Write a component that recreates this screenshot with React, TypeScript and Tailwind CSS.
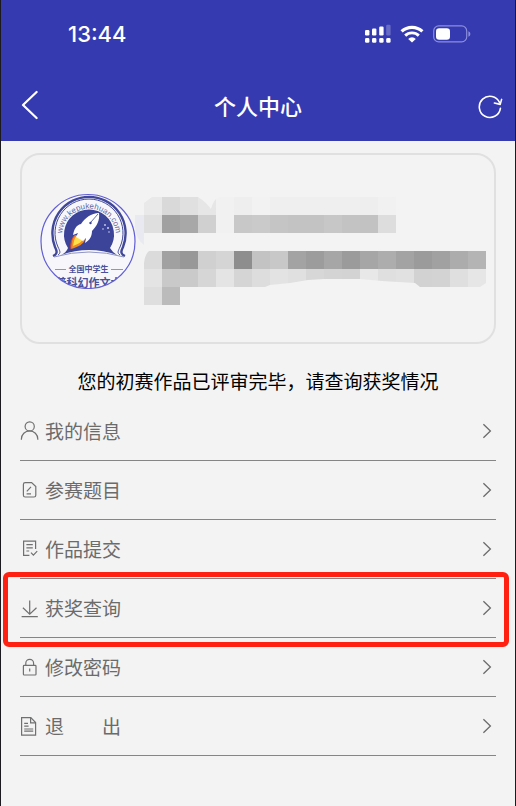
import React from 'react';

interface MenuItemProps {
  label: string;
  icon: React.ReactNode;
  highlighted?: boolean;
}

const CELL = 18;

// shades of the hidden user details, one array per row of cells
const mosaicRows: string[][] = [
  ['#e9e9e9', '#d9d9d9', '#e0e0e0', '#e6e6e6', '#f1f1f1', '#eeeeee', '#f2f2f2', '#efefef', '#efefef', '#efefef', '#efefef', '#efefef', '#eeeeee', '#f1f1f1'],
  ['#dfdfdf', '#a1a1a1', '#a8a8a8', '#d0d0d0', '#f1f1f1', '#c8c8c8', '#cacaca', '#c5c5c5', '#c3c3c3', '#c3c3c3', '#c7c7c7', '#c3c3c3', '#c2c2c2', '#dddddd'],
  [],
  ['#dbdbdb', '#a1a1a1', '#989898', '#d0d0d0', '#d5d5d5', '#8e8e8e', '#c3c3c3', '#c8c8c8', '#a3a3a3', '#9c9c9c', '#a6a6a6', '#9b9b9b', '#a6a6a6', '#adadad', '#a3a3a3', '#9b9b9b', '#a1a1a1', '#acacac', '#b4b4b4'],
  ['#e4e4e4', '#c9c9c9', '#cacaca', '#d6d6d6', '#e4e4e4', '#d5d5d5', '#dddddd', '#e3e3e3', '#e0e0e0', '#d7d7d7', '#d4d4d4', '#d3d3d3', '#e8e8e8', '#dfdfdf', '#e1e1e1', '#d2d2d2', '#d3d3d3', '#dfdfdf', '#e6e6e6'],
  ['#dedede', '#bbbbbb'],
];

const HiddenDetails = () => (
  <svg width="352" height="108" viewBox="-10 0 352 108" aria-hidden="true" className="shrink-0">
    <defs>
      <clipPath id="brush">
        <path d="M8 0H54Q62 5 67 12Q69 4 74 0H342V86L336 90H276L271 86L238 84L216 82H180L164 83L146 86L126 88L121 90H36V108H0V66Q1 57 5 54V36H0V6Z" />
      </clipPath>
    </defs>
    <path d="M-9 18H0V48Q-8 42 -9 30Z" fill="#e9e9f1" />
    <g clipPath="url(#brush)" shapeRendering="crispEdges">
      {mosaicRows.map((row, y) =>
        row.map((fill, x) => (
          <rect key={`${x}-${y}`} x={x * CELL} y={y * CELL} width={CELL} height={CELL} fill={fill} />
        ))
      )}
    </g>
  </svg>
);

const ContestLogo = () => (
  <svg width="96" height="96" viewBox="0 0 96 96" role="img" aria-label="全国中学生科普科幻作文大赛" className="shrink-0">
    <defs>
      <clipPath id="logo-round">
        <circle cx="48" cy="48.5" r="47" />
      </clipPath>
      <path id="site-arc" d="M24.5 54A27 27 0 1 1 73.5 54" />
    </defs>
    <g clipPath="url(#logo-round)">
      <rect width="96" height="96" fill="#f7f7fb" />
      <path d="M13 63C18 61 17 58 15 54A36.6 36.6 0 1 1 83 54C81 58 80 61 85 63" fill="none" stroke="#424899" strokeWidth="2.4" />
      <path d="M18 62C21 60 20 58 18 54A34 34 0 1 1 80 54C78 58 77 60 80 62" fill="none" stroke="#424899" strokeWidth="1" />
      <path d="M28 55A25 25 0 1 1 70 55Q73 60 77 62Q49 52 21 62Q26 60 28 55Z" fill="#3c4499" />
      <path d="M14 64Q49 54 84 64" fill="none" stroke="#7378b5" strokeWidth="0.8" />
      <text fontSize="8" fill="#6267a6" fontFamily="Liberation Sans, sans-serif">
        <textPath href="#site-arc" startOffset="50%" textAnchor="middle">www.kepukehuan.com</textPath>
      </text>
      <path d="M36 42C32 43 31 49 31 56C38 54 44 51 45 46Z" fill="#f08a24" />
      <path d="M37 43C34 45 34 49 33 53C38 51 42 49 43 46Z" fill="#ffe04a" />
      <path d="M31 56C30 51 32 45 35 42" fill="none" stroke="#d94a2b" strokeWidth="1" />
      <path d="M59 20C51 20 45 25 41 31C36 32 34 37 33 42L38 40L36 44L43 48L46 45L45 50C50 47 52 43 52 38C57 33 60 27 59 20Z" fill="#ffffff" />
      <path d="M58 21L51 29" stroke="#3c4499" strokeWidth="0.8" />
      <circle cx="50.5" cy="30" r="1.2" fill="#3c4499" />
      <circle cx="65" cy="32" r="0.9" fill="#cfd2ec" />
      <circle cx="68" cy="35" r="1" fill="#cfd2ec" />
      <circle cx="63" cy="36" r="0.8" fill="#cfd2ec" />
      <circle cx="69" cy="39" r="0.8" fill="#cfd2ec" />
      <path d="M15 76.5H26M71 76.5H83" stroke="#8588bb" strokeWidth="0.9" />
      <g fill="#4a509b" fontFamily="'Noto Sans CJK SC', sans-serif" fontWeight="700" textAnchor="middle">
        <text x="48.5" y="78.5" fontSize="8">全国中学生</text>
        <text x="48.5" y="94" fontSize="11">普科幻作文大</text>
      </g>
    </g>
    <circle cx="48" cy="48.5" r="47" fill="none" stroke="#625fd6" strokeWidth="1.2" />
  </svg>
);

const SignalIcon = () => (
  <svg width="27" height="20" viewBox="0 0 27 20" fill="#fff" aria-hidden="true">
    <rect x="1" y="6" width="4.4" height="5.5" rx="1.2" />
    <rect x="8" y="4.5" width="4.4" height="7" rx="1.2" />
    <rect x="15.2" y="2.5" width="4.4" height="9" rx="1.2" />
    <rect x="22.2" y="0.8" width="4.4" height="10.7" rx="1.2" opacity="0.25" />
    <rect x="1" y="14" width="4.4" height="4.8" rx="1.4" />
    <rect x="8" y="14" width="4.4" height="4.8" rx="1.4" />
    <rect x="15.2" y="14" width="4.4" height="4.8" rx="1.4" />
    <rect x="22.2" y="14" width="4.4" height="4.8" rx="1.4" />
  </svg>
);

const WifiIcon = () => (
  <svg width="24" height="18" viewBox="0 0 24 18" aria-hidden="true">
    <path d="M1.6 6.4A15.2 15.2 0 0 1 22.4 6.4" fill="none" stroke="#fff" strokeWidth="3.2" />
    <path d="M5.2 10.6A9.8 9.8 0 0 1 18.8 10.6" fill="none" stroke="#fff" strokeWidth="2.9" />
    <path d="M12 17.6L8.2 13.9A5.4 5.4 0 0 1 15.8 13.9Z" fill="#fff" />
  </svg>
);

const BatteryIcon = () => (
  <svg width="38" height="18" viewBox="0 0 38 18" aria-hidden="true">
    <rect x="0.7" y="0.9" width="33" height="16" rx="5" fill="none" stroke="#8b8edb" strokeWidth="1.2" />
    <rect x="3" y="3.2" width="14" height="11.6" rx="3.2" fill="#fff" />
    <path d="M35.4 6.3Q37.4 7 37.4 9T35.4 11.7Z" fill="#8b8edb" />
  </svg>
);

const UserIcon = () => (
  <>
    <circle cx="9.7" cy="5.4" r="4.6" />
    <path d="M1.4 18.8V18A8.2 8.2 0 0 1 17.8 18V18.8" />
  </>
);

const TopicIcon = () => (
  <>
    <path d="M5.2 2.6H11.6L15.8 6.6V15.2Q15.8 17 14 17H5.2Q3.4 17 3.4 15.2V4.4Q3.4 2.6 5.2 2.6Z" />
    <path d="M11 6.8L6.8 11.4M6.6 13.8H11" />
  </>
);

const SubmitIcon = () => (
  <>
    <path d="M15.6 10V2.2H3.6V16.4H9.4" />
    <path d="M6.4 5.6H12.8M6.4 8.8H12.8M6.4 12H9.2M11 13.6L13.4 16.2L17.2 12.2" />
  </>
);

const AwardIcon = () => <path d="M9.7 2.6V16M2.9 9.8L9.7 16.2L16.5 9.8M1.6 18.7H17.8" />;

const LockIcon = () => (
  <>
    <rect x="3.4" y="8.4" width="12.6" height="9.6" rx="0.8" />
    <path d="M5.8 8.4V6.2A3.9 3.9 0 0 1 13.6 6.2V8.4M9.7 11.4V14.6" />
  </>
);

const ExitIcon = () => (
  <>
    <path d="M1.6 1.6H10.8L15.6 6.6V19.2H1.6Z" />
    <path d="M10.6 1.8V6.8H15.4M4.2 7.4H8M4.2 10.2H8.6M4.2 13H13.2M4.2 15.2H13.2" />
  </>
);

const MenuItem: React.FC<MenuItemProps> = ({ label, icon, highlighted }) => {
  return (
    <li className="relative">
      <button type="button" className="flex h-[59px] w-full cursor-pointer items-center border-b border-[#858585] text-left text-[#6b6b6b]">
        <svg width="20" height="20" viewBox="0 0 20 20" fill="none" stroke="#707070" strokeWidth="1.2" aria-hidden="true" className="shrink-0">
          {icon}
        </svg>
        <span className="ml-[5px] grow text-[19px] leading-7 whitespace-pre">{label}</span>
        <svg width="16" height="16" viewBox="0 0 16 16" fill="none" stroke="#6b6b6b" strokeWidth="1.3" aria-hidden="true">
          <path d="M3.4 1.2L10.4 8L3.4 14.8" />
        </svg>
      </button>
      {highlighted && (
        <div className="pointer-events-none absolute -top-[7px] -right-[13px] -bottom-[9px] -left-[17px] rounded-md border-5 border-[#ff2012]"></div>
      )}
    </li>
  );
};

export default function App() {
  return (
    <div className="min-h-screen border-x border-[#1c1a1e] bg-[#f3f3f3] font-['Noto_Sans_CJK_SC',sans-serif]">
      <header className="bg-[#353ab0] text-white">
        <div className="flex h-17 items-center justify-between pr-11 pl-[67px]">
          <time className="font-['Inter',sans-serif] text-[22px] font-medium">13:44</time>
          <div className="flex items-center gap-[9px]">
            <SignalIcon />
            <WifiIcon />
            <BatteryIcon />
          </div>
        </div>
        <div className="flex h-[73px] items-center justify-between pr-3 pl-5">
          <button type="button" aria-label="返回" className="cursor-pointer">
            <svg width="17" height="30" viewBox="0 0 17 30" fill="none" stroke="#fff" strokeWidth="2.2" strokeLinecap="round" strokeLinejoin="round">
              <path d="M15.6 2L2 15L15.6 28" />
            </svg>
          </button>
          <h1 className="text-[22px] leading-8 font-medium">个人中心</h1>
          <button type="button" aria-label="刷新" className="cursor-pointer pt-1">
            <svg width="25" height="25" viewBox="0 0 25 25" fill="none" stroke="#fff" strokeWidth="1.6" strokeLinecap="round" strokeLinejoin="round">
              <path d="M22.4 14.4A10.6 10.6 0 1 1 21.6 8.6" />
              <path d="M16.4 9L22.2 10.4L23.6 5.4" />
            </svg>
          </button>
        </div>
      </header>

      <main className="px-[19px] pt-3">
        <section className="flex h-[191px] items-center overflow-hidden rounded-[20px] border-2 border-[#e0e0e0] pl-[18px]">
          <div className="pb-4">
            <ContestLogo />
          </div>
          <div className="-ml-0.5 pt-1">
            <HiddenDetails />
          </div>
        </section>

        <p className="mt-[23px] text-center text-[19px] leading-7 text-black">您的初赛作品已评审完毕，请查询获奖情况</p>

        <nav className="mt-[7px]">
          <ul>
            <MenuItem label="我的信息" icon={<UserIcon />} />
            <MenuItem label="参赛题目" icon={<TopicIcon />} />
            <MenuItem label="作品提交" icon={<SubmitIcon />} />
            <MenuItem label="获奖查询" icon={<AwardIcon />} highlighted />
            <MenuItem label="修改密码" icon={<LockIcon />} />
            <MenuItem label={'退\u3000\u3000出'} icon={<ExitIcon />} />
          </ul>
        </nav>
      </main>
    </div>
  );
}
